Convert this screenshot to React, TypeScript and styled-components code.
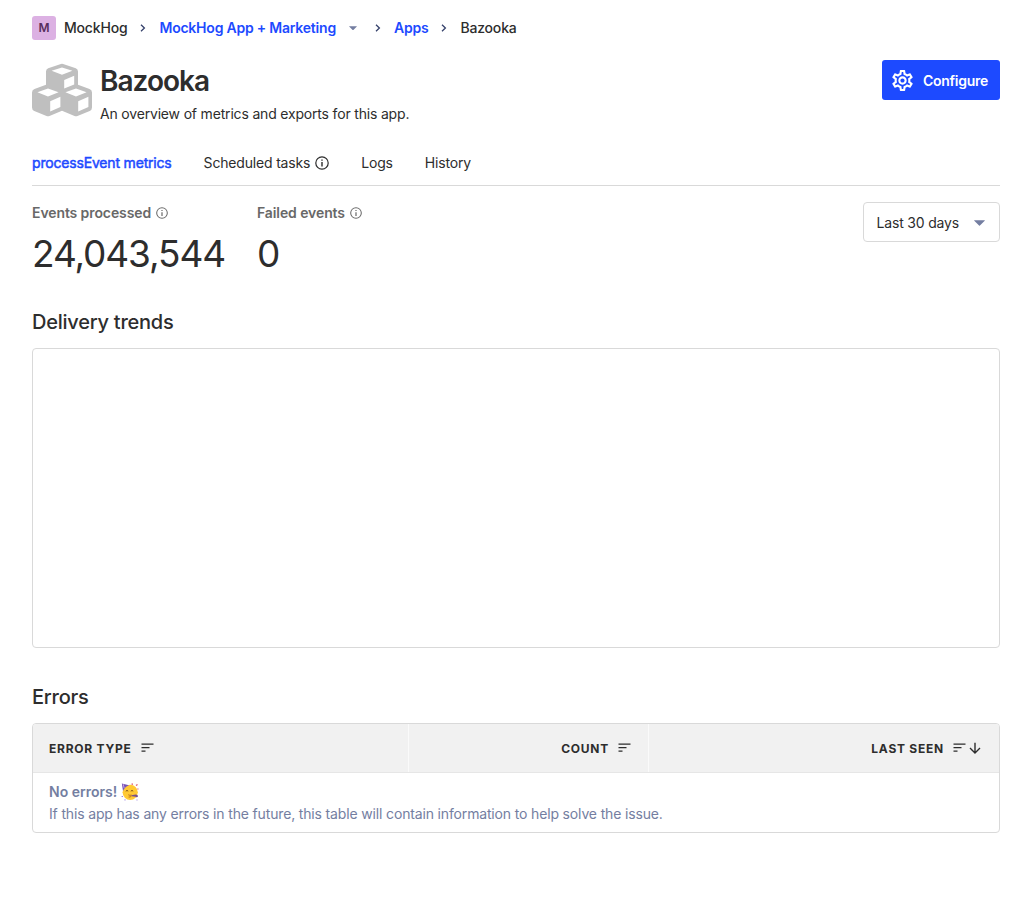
import React from "react";
import styled, { createGlobalStyle } from "styled-components";

const Global = createGlobalStyle`
  * { box-sizing: border-box; }
  body { margin: 0; background: #fff; color: #2d2d2d; font-family: Inter, "Liberation Sans", sans-serif; font-size: 14px; line-height: 20px; letter-spacing: -0.18px; -webkit-font-smoothing: antialiased; }
  h1, h2, p { margin: 0; }
  svg { display: block; flex: none; }
`;
const Page = styled.main`padding: 16px 32px 0; height: 898px;`;
const Crumbs = styled.nav`display: flex; align-items: center; height: 24px; font-weight: 500;`;
const Avatar = styled.span`width: 24px; height: 24px; border-radius: 3px; background: #dcb1e3; color: #572e5e; font-size: 12px; font-weight: 600; display: flex; align-items: center; justify-content: center; margin-right: 8px;`;
const Crumb = styled.span<{ $link?: boolean }>`color: ${p => (p.$link ? "#1d4aff" : "#2d2d2d")}; font-weight: ${p => (p.$link ? 600 : 500)}; letter-spacing: ${p => (p.$link ? "-0.22px" : "-0.18px")}; white-space: nowrap;`;
const Separator = styled.span`width: 32px; display: flex; justify-content: center;`;
const Caret = styled.span`margin-left: 13px; margin-right: 5px;`;

const Header = styled.header`display: flex; margin-top: 20px; height: 68px; align-items: flex-start;`;
const Logo = styled.div`margin: 3px 8px 0 0;`;
const Heading = styled.div`flex: 1;`;
const Title = styled.h1`font-size: 28px; line-height: 42px; font-weight: 600; letter-spacing: -1px;`;
const Subtitle = styled.p`margin-top: 2px;`;
const Configure = styled.button`width: 118px; height: 40px; border: 0; border-radius: 3px; background: #1d4aff; color: #fff; font: 600 14px/20px Inter, sans-serif; letter-spacing: -0.27px; display: flex; align-items: center; gap: 10px; padding: 1px 10px 0; white-space: nowrap; svg { margin-top: -1px; }`;

const Tabs = styled.div`display: flex; gap: 32px; margin-top: 12px; height: 46px; border-bottom: 1px solid #d9d9d9; padding-top: 13px;`;
const Tab = styled.span<{ $active?: boolean }>`display: flex; gap: 5px; color: ${p => (p.$active ? "#1d4aff" : "#2d2d2d")}; -webkit-text-stroke: ${p => (p.$active ? "0.5px" : "0")}; svg { margin-top: 3px; }`;

const Summary = styled.section`display: flex; padding-top: 16px; height: 124px;`;
const Metric = styled.div<{ $width: number }>`width: ${p => p.$width}px;`;
const Label = styled.div`display: flex; align-items: center; gap: 5px; height: 22px; color: #686868; font-weight: 600; letter-spacing: -0.1px;`;
const Value = styled.div`padding-top: 1px; font-size: 37px; line-height: 57px; letter-spacing: -1.1px;`;
const Select = styled.div`margin-left: auto; width: 137px; height: 40px; border: 1px solid #d9d9d9; border-radius: 4px; display: flex; align-items: center; justify-content: space-between; padding: 2px 14px 0 12.5px;`;
const SectionTitle = styled.h2`font-size: 20px; line-height: 24px; font-weight: 500; letter-spacing: -0.24px;`;
const Chart = styled.div`margin-top: 14px; height: 300px; border: 1px solid #d9d9d9; border-radius: 4px; margin-bottom: 37px;`;

const Table = styled.div`margin-top: 14px; height: 110px; border: 1px solid #d9d9d9; border-radius: 4px; overflow: hidden;`;
const HeadRow = styled.div`display: grid; grid-template-columns: 376px 240px 1fr; height: 49px; background: #f1f1f1; border-bottom: 1px solid #e6e6e6;`;
const HeadCell = styled.div<{ $end?: boolean }>`display: flex; align-items: center; justify-content: ${p => (p.$end ? "flex-end" : "flex-start")}; padding: 1px 17px 0 16px; font-size: 12px; font-weight: 700; letter-spacing: 0.76px; border-right: 1px solid #fafafa; &:last-child { border-right: 0; padding-right: 18px; } svg { margin: -1px 0 0 9px; } svg + svg { margin-left: 3px; }`;
const Empty = styled.div`padding: 8px 16px; line-height: 22px; color: #747ea1; letter-spacing: -0.155px;`;
const EmptyTitle = styled.div`display: flex; align-items: center; gap: 4px; font-weight: 600; letter-spacing: 0;`;

const Chevron = () => (
  <svg width="6" height="8" viewBox="0 0 6 8"><path d="M1 .7 4.4 4 1 7.3" fill="none" stroke="#35416b" strokeWidth="1.3" /></svg>
);
const Triangle = ({ size = 11 }: { size?: number }) => (
  <svg width={size} height={size / 2 + 0.5} viewBox="0 0 10 5.5"><path d="M.3.2h9.4q.4.1.1.5L5.4 5q-.4.4-.8 0L.2.7Q-.1.3.3.2Z" fill="#747ea1" /></svg>
);
const Info = ({ size = 14 }: { size?: number }) => (
  <svg width={size} height={size} viewBox="0 0 14 14"><circle cx="7" cy="7" r="6.2" fill="none" stroke="currentColor" strokeWidth="1.2" /><path d="M6.3 3.4h1.4v1.4H6.3ZM6.3 6.1h1.4v4.4H6.3Z" fill="currentColor" /></svg>
);
const Gear = () => (
  <svg width="21" height="21" viewBox="2 2 20 20" fill="#fff"><path d="M19.43 12.98c.04-.32.07-.64.07-.98s-.03-.66-.07-.98l2.11-1.65c.19-.15.24-.42.12-.64l-2-3.46c-.09-.16-.26-.25-.44-.25-.06 0-.12.01-.17.03l-2.49 1c-.52-.4-1.08-.73-1.69-.98l-.38-2.65C14.46 2.18 14.25 2 14 2h-4c-.25 0-.46.18-.49.42l-.38 2.65c-.61.25-1.17.59-1.69.98l-2.49-1c-.06-.02-.12-.03-.18-.03-.17 0-.34.09-.43.25l-2 3.46c-.13.22-.07.49.12.64l2.11 1.65c-.04.32-.07.65-.07.98s.03.66.07.98l-2.11 1.65c-.19.15-.24.42-.12.64l2 3.46c.09.16.26.25.44.25.06 0 .12-.01.17-.03l2.49-1c.52.4 1.08.73 1.69.98l.38 2.65c.03.24.24.42.49.42h4c.25 0 .46-.18.49-.42l.38-2.65c.61-.25 1.17-.59 1.69-.98l2.49 1c.06.02.12.03.18.03.17 0 .34-.09.43-.25l2-3.46c.12-.22.07-.49-.12-.64l-2.11-1.65zm-1.98-1.71c.04.31.05.52.05.73 0 .21-.02.43-.05.73l-.14 1.13.89.7 1.08.84-.7 1.21-1.27-.51-1.04-.42-.9.68c-.43.32-.84.56-1.25.73l-1.06.43-.16 1.13-.2 1.35h-1.4l-.19-1.35-.16-1.13-1.06-.43c-.43-.18-.83-.41-1.23-.71l-.91-.7-1.06.43-1.27.51-.7-1.21 1.08-.84.89-.7-.14-1.13c-.03-.31-.05-.54-.05-.74s.02-.43.05-.73l.14-1.13-.89-.7-1.08-.84.7-1.21 1.27.51 1.04.42.9-.68c.43-.32.84-.56 1.25-.73l1.06-.43.16-1.13.2-1.35h1.39l.19 1.35.16 1.13 1.06.43c.43.18.83.41 1.23.71l.91.7 1.06-.43 1.27-.51.7 1.21-1.07.85-.89.7.14 1.13zM12 8c-2.21 0-4 1.79-4 4s1.79 4 4 4 4-1.79 4-4-1.79-4-4-4zm0 6c-1.1 0-2-.9-2-2s.9-2 2-2 2 .9 2 2-.9 2-2 2z" /></svg>
);
const Cubes = () => (
  <svg width="60" height="54" viewBox="0 0 60 54">
    <path fill="#bfbfbf" d="M28.9 1q1.1-.4 2.2 0l12.700 4.200Q46 6 46 8.400V21.800L57.500 26q2.500.9 2.500 3.400V44.500q0 2.500-2.300 3.500L45.500 53q-1.500.6-3 0L30 47.800 17.500 53q-1.500.6-3 0L2.300 48Q0 47 0 44.500V29.400Q0 26.900 2.500 26L14 21.800V8.400Q14 6 16.200 5.200Z" />
    <path fill="#fff" d="m30 4.400 10.400 3.400L30 11.800 19.600 7.800ZM32.200 17 42.200 12.800v8.600l-10 4.200ZM16 25.600l10.600 3.600L16 33.600 5.400 29.200ZM44 25.600l10.600 3.600L44 33.600 33.400 29.200ZM18.200 38.200 28.400 33.800v10.200L18.200 48.600ZM46.200 38.200 56.400 33.800v10.200L46.200 48.600Z" />
  </svg>
);
const Sort = () => (
  <svg width="13" height="10" viewBox="0 0 13 10"><path d="M.5 1.200h12M.5 4.700h8M.5 8.200h4" stroke="#2d2d2d" strokeWidth="1.200" /></svg>
);
const ArrowDown = () => (
  <svg width="12" height="12" viewBox="0 0 12 12"><path d="M6 .8v10M1 6l5 5 5-5" fill="none" stroke="#2d2d2d" strokeWidth="1.400" /></svg>
);
const PartyFace = () => (
  <svg width="18" height="18" viewBox="0 0 18 18">
    <circle cx="9.200" cy="9.300" r="7.600" fill="#ffc934" />
    <path d="M.8.6 8 2.200Q3.500 4 2 8Z" fill="#7653b5" />
    <path d="m2.200 1.200 1 4" stroke="#c5a1e4" />
    <path d="M4.800 8.200q1.200-1.600 2.400 0M9.800 8.200q1.200-1.600 2.400 0" fill="none" stroke="#704416" strokeWidth=".9" />
    <path d="M7.300 11.800q1.700 1 3.200.2M7.600 14q1.500.5 2.900-1" fill="none" stroke="#b56a1d" strokeWidth=".9" />
    <path d="m10.500 12.300 4-.9q2.600-.1 2.500 1.900-.7 1.800-2.400.4l-4-.4Z" fill="#77508e" />
    <path d="M10.500 1.200h1.500M15 2.500l1.500-1M16.300 6h1.200" stroke="#db536d" strokeWidth="1.200" />
    <path d="M.6 13.500H2M3.500 16.800h1M15.500 17h1" stroke="#9a83dd" strokeWidth="1.200" />
  </svg>
);

export default function App() {
  return (
    <Page>
      <Global />
      <Crumbs>
        <Avatar>M</Avatar><Crumb>MockHog</Crumb><Separator><Chevron /></Separator>
        <Crumb $link>MockHog App + Marketing</Crumb><Caret><Triangle size={8} /></Caret>
        <Separator><Chevron /></Separator><Crumb $link>Apps</Crumb>
        <Separator><Chevron /></Separator><Crumb>Bazooka</Crumb>
      </Crumbs>
      <Header>
        <Logo><Cubes /></Logo>
        <Heading><Title>Bazooka</Title><Subtitle>An overview of metrics and exports for this app.</Subtitle></Heading>
        <Configure><Gear />Configure</Configure>
      </Header>
      <Tabs>
        <Tab $active>processEvent metrics</Tab><Tab>Scheduled tasks <Info /></Tab><Tab>Logs</Tab><Tab>History</Tab>
      </Tabs>
      <Summary>
        <Metric $width={225}><Label>Events processed <Info size={12} /></Label><Value>24,043,544</Value></Metric>
        <Metric $width={160}><Label>Failed events <Info size={12} /></Label><Value>0</Value></Metric>
        <Select>Last 30 days <Triangle /></Select>
      </Summary>
      <SectionTitle>Delivery trends</SectionTitle>
      <Chart />
      <SectionTitle>Errors</SectionTitle>
      <Table>
        <HeadRow>
          <HeadCell>ERROR TYPE<Sort /></HeadCell>
          <HeadCell $end>COUNT<Sort /></HeadCell>
          <HeadCell $end>LAST SEEN<Sort /><ArrowDown /></HeadCell>
        </HeadRow>
        <Empty>
          <EmptyTitle>No errors! <PartyFace /></EmptyTitle>
          <p>If this app has any errors in the future, this table will contain information to help solve the issue.</p>
        </Empty>
      </Table>
    </Page>
  );
}
